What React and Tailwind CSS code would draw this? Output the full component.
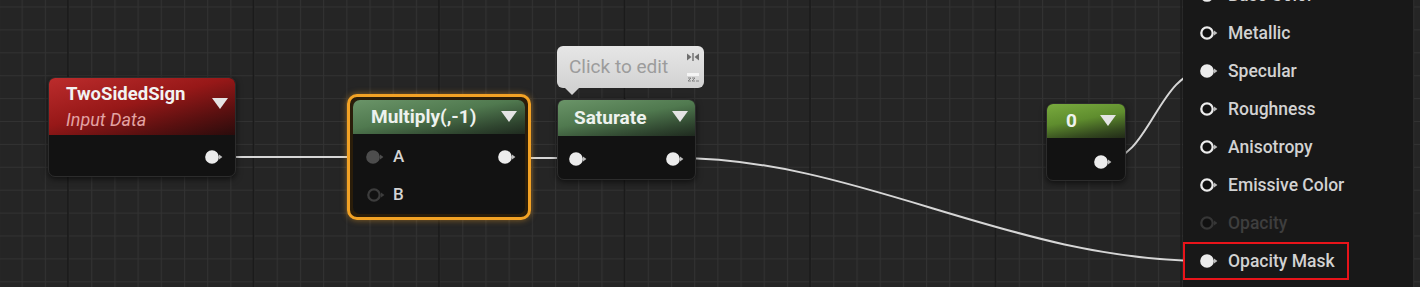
import React from "react";

const font = "font-['Roboto',sans-serif]";

function Pin({ filled = false, tone = "light" }) {
  const c = tone === "dim" ? "#363636" : tone === "gray" ? "#4d4d4d" : tone === "hollow" ? "#3c3c3c" : "#ececec";
  const arrow = tone === "light" ? "#bdbdbd" : c;
  const fill = filled ? c : "#111";
  return (
    <svg width="20" height="16" viewBox="0 0 20 16" className="shrink-0">
      <circle cx="8" cy="8" r="5.7" fill={fill} stroke={c} strokeWidth="2.3" />
      <polygon points="15,5.6 18.4,8 15,10.4" fill={arrow} />
    </svg>
  );
}

function Caret() {
  return (
    <svg width="16" height="11" viewBox="0 0 16 11">
      <polygon points="0,0 16,0 8,11" fill="#e4e4e4" />
    </svg>
  );
}

function Grid() {
  const majors = [];
  for (let x = 68; x < 1420; x += 185.52) majors.push(x);
  return (
    <svg className="absolute inset-0" width="1420" height="287">
      <defs>
        <pattern id="minor" width="23.19" height="22.9" patternUnits="userSpaceOnUse" x="21.62" y="6.5">
          <path d="M0.5 0 V22.9 M0 0.5 H23.19" stroke="#323232" strokeWidth="1.2" fill="none" />
        </pattern>
      </defs>
      <rect width="1420" height="287" fill="#252525" />
      <rect width="1420" height="287" fill="url(#minor)" />
      {majors.map((x) => (
        <line key={x} x1={x} y1="0" x2={x} y2="287" stroke="#1b1b1b" strokeWidth="1.6" />
      ))}
      <g stroke="#d6d6d6" strokeWidth="2" fill="none">
        <path d="M220 157 L372 157" />
        <path d="M505 158 L578 158" />
        <path d="M676 158 C 860 158, 1010 261, 1207 261" />
        <path d="M1104 161 C 1150 161, 1158 70, 1207 70" />
      </g>
    </svg>
  );
}

const rows = [
  { label: "Base Color", filled: true },
  { label: "Metallic" },
  { label: "Specular", filled: true },
  { label: "Roughness" },
  { label: "Anisotropy" },
  { label: "Emissive Color" },
  { label: "Opacity", dim: true },
  { label: "Opacity Mask", filled: true, mark: true },
];

export default function App() {
  return (
    <div className={`relative w-[1420px] h-[287px] overflow-hidden bg-[#252525] ${font}`}>
      <Grid />

      {/* TwoSidedSign */}
      <div className="absolute left-[48px] top-[77px] w-[188px] h-[100px] rounded-[7px] overflow-hidden bg-[#121212] border border-[#2c2c2c] shadow-[0_2px_6px_rgba(0,0,0,0.6)] flex flex-col">
        <div className="relative h-[57px] pl-[17px] pt-[6px] bg-[linear-gradient(165deg,#bc2c2c_0%,#971818_45%,#5a1010_75%,#2a0c0c_100%)]">
          <div className="text-[18.5px] leading-[20px] font-bold text-[#f2f2f2]">TwoSidedSign</div>
          <div className="mt-[6px] text-[18px] leading-[20px] italic text-[#e3a3a3]">Input Data</div>
          <div className="absolute left-[163px] top-[20px]">
            <Caret />
          </div>
        </div>
        <div className="mt-[14px] h-[16px] flex justify-end pr-[11px]">
          <Pin filled />
        </div>
      </div>

      {/* Multiply (selected) */}
      <div className="absolute left-[347px] top-[94px] w-[184px] h-[126px] rounded-[10px] border-[3px] border-[#f2a225] bg-[#2a1d0a] p-[3px] shadow-[0_0_6px_rgba(242,162,37,0.5)]">
        <div className="w-full h-full rounded-[7px] overflow-hidden bg-[#121212] flex flex-col">
          <div className="relative h-[35px] pl-[18px] flex items-center bg-[linear-gradient(170deg,#6a9468_0%,#50794f_45%,#2f452f_80%,#1f2a1f_100%)]">
            <span className="text-[19px] font-bold text-[#eef2ee]">Multiply(,-1)</span>
            <div className="absolute left-[148px] top-[11px]">
              <Caret />
            </div>
          </div>
          <div className="pt-[4px] flex flex-col">
            <div className="h-[38px] flex items-center pl-[12px] pr-[8px]">
              <Pin filled tone="gray" />
              <span className="ml-[8px] text-[17px] font-medium text-[#d4d4d4]">A</span>
              <div className="ml-auto">
                <Pin filled />
              </div>
            </div>
            <div className="h-[38px] flex items-center pl-[13px]">
              <Pin tone="hollow" />
              <span className="ml-[7px] text-[17px] font-medium text-[#d4d4d4]">B</span>
            </div>
          </div>
        </div>
      </div>

      {/* comment bubble */}
      <div className="absolute left-[557px] top-[46px] w-[147px] h-[42px] rounded-[6px] bg-[linear-gradient(180deg,#e6e6e6_0%,#d2d2d2_100%)] flex items-center pl-[12px]">
        <span className="text-[19px] text-[#9c9c9c]">Click to edit</span>
        <svg className="absolute right-[5px] top-[7px]" width="12" height="8" viewBox="0 0 12 8">
          <polygon points="0,0.5 4.5,4 0,7.5" fill="#6e6e6e" />
          <polygon points="12,0.5 7.5,4 12,7.5" fill="#6e6e6e" />
          <rect x="5.3" y="0" width="1.4" height="8" fill="#6e6e6e" />
        </svg>
        <svg className="absolute right-[5px] top-[27px]" width="12" height="9" viewBox="0 0 12 9">
          <rect x="0" y="0" width="12" height="3" fill="#f4f4f4" />
          <path d="M1 5 H4 L1 8 H4 M5 5 H8 L5 8 H8 M9 8 H12" stroke="#7a7a7a" strokeWidth="0.9" fill="none" />
        </svg>
        <div className="absolute left-[8px] top-[42px] w-0 h-0 border-l-[7px] border-r-[7px] border-t-[7px] border-l-transparent border-r-transparent border-t-[#d2d2d2]" />
      </div>

      {/* Saturate */}
      <div className="absolute left-[557px] top-[99px] w-[139px] h-[81px] rounded-[7px] overflow-hidden bg-[#121212] border border-[#2c2c2c] shadow-[0_2px_6px_rgba(0,0,0,0.6)] flex flex-col">
        <div className="relative h-[36px] pl-[16px] flex items-center bg-[linear-gradient(170deg,#6a9468_0%,#50794f_45%,#2f452f_80%,#1f2a1f_100%)]">
          <span className="text-[19px] font-bold text-[#eef2ee]">Saturate</span>
          <div className="absolute left-[114px] top-[11px]">
            <Caret />
          </div>
        </div>
        <div className="mt-[15px] h-[16px] flex justify-between pl-[10px] pr-[10px]">
          <Pin filled />
          <Pin filled />
        </div>
      </div>

      {/* constant 0 */}
      <div className="absolute left-[1046px] top-[103px] w-[80px] h-[78px] rounded-[7px] overflow-hidden bg-[#121212] border border-[#2c2c2c] shadow-[0_2px_6px_rgba(0,0,0,0.6)] flex flex-col">
        <div className="relative h-[34px] pl-[19px] flex items-center bg-[linear-gradient(170deg,#79aa3e_0%,#5f8d2e_45%,#34491f_80%,#222b18_100%)]">
          <span className="text-[19px] font-bold text-[#eef2ee]">0</span>
          <div className="absolute left-[53px] top-[11px]">
            <Caret />
          </div>
        </div>
        <div className="mt-[16px] h-[16px] flex justify-end pr-[12px]">
          <Pin filled />
        </div>
      </div>

      {/* material result panel */}
      <div className="absolute left-[1183px] top-0 w-[231px] h-[287px] bg-[#181818] border-r border-[#2a2a2a]">
        <div className="-mt-[24px] flex flex-col">
          {rows.map((r) => (
            <div
              key={r.label}
              className={`h-[38px] flex items-center ${
                r.mark ? "w-[166px] border-2 border-[#e8141a] pl-[14px]" : "pl-[16px]"
              }`}
            >
              <Pin filled={r.filled} tone={r.dim ? "dim" : "light"} />
              <span
                className={`ml-[9px] text-[17.5px] font-medium ${
                  r.dim ? "text-[#3e3e3e]" : "text-[#d2d2d2]"
                }`}
              >
                {r.label}
              </span>
            </div>
          ))}
        </div>
      </div>
    </div>
  );
}
